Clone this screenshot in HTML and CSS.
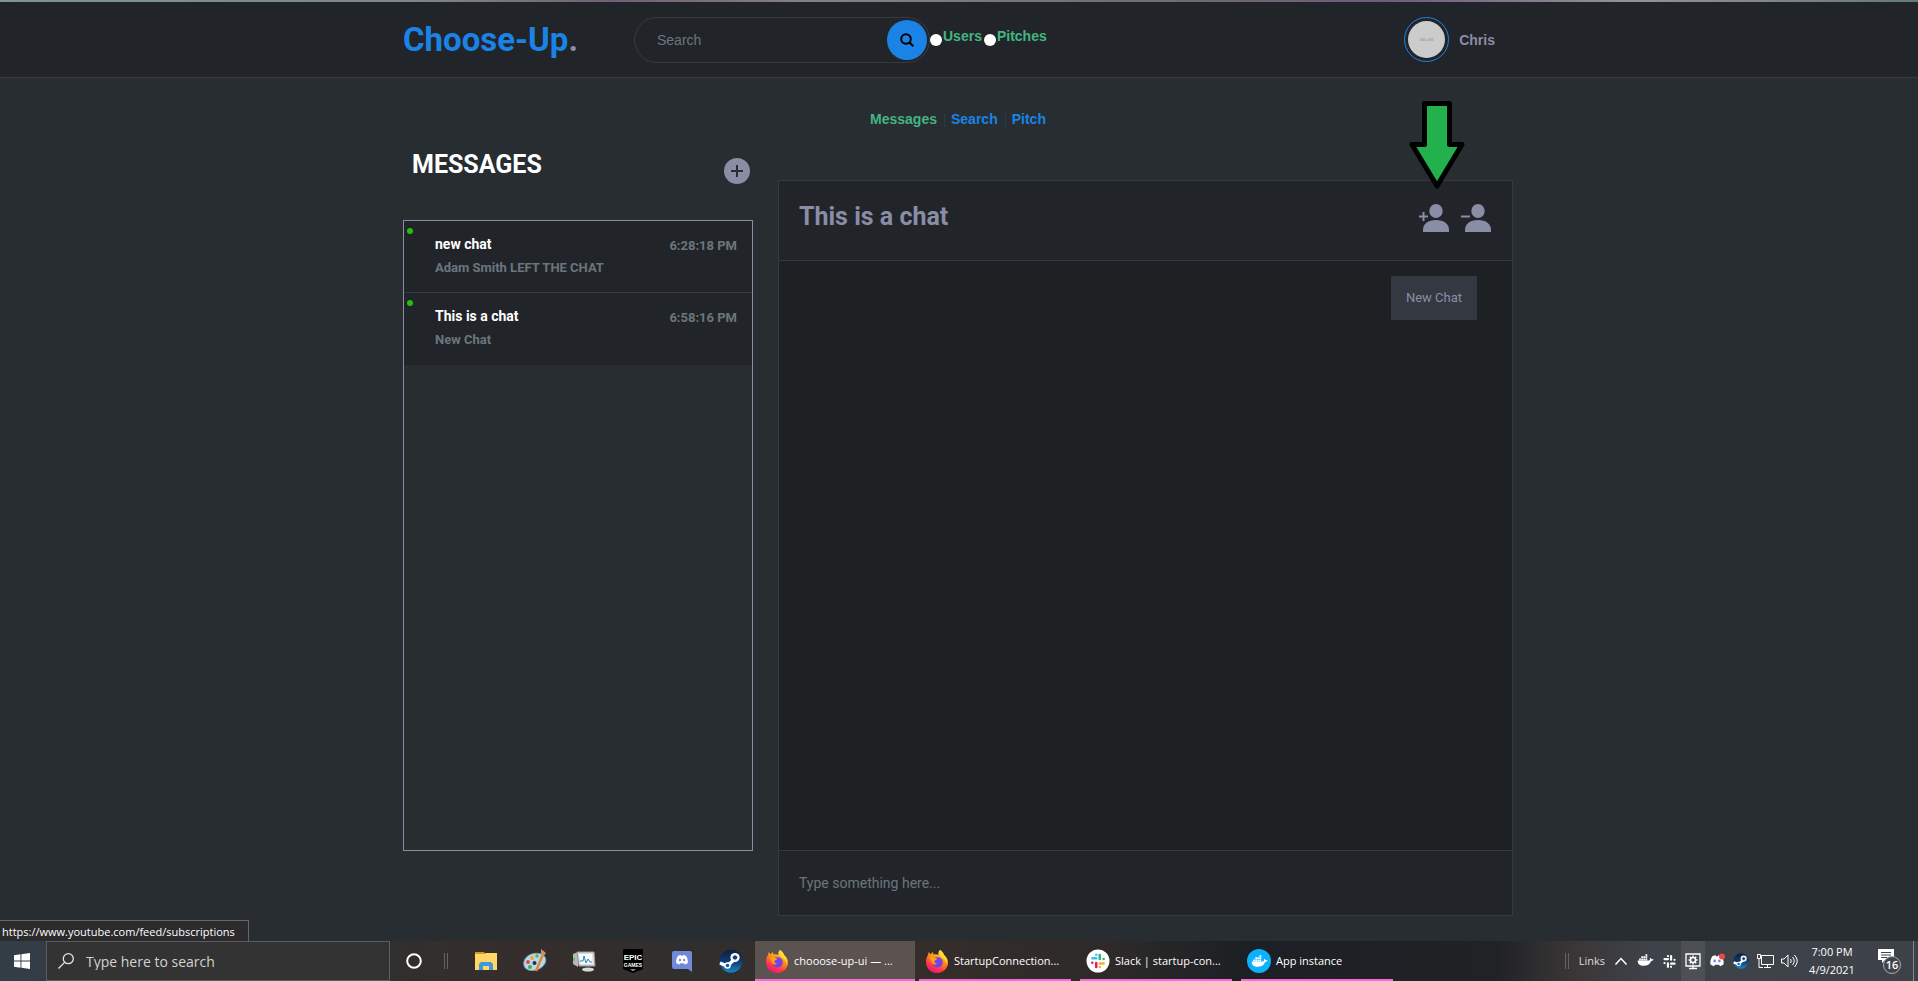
FILE: index.html
```html
<!DOCTYPE html>
<html lang="en">
<head>
<meta charset="utf-8">
<title>choose-up-ui</title>
<link rel="stylesheet" href="styles.css">
</head>
<body>
<svg class="defs" aria-hidden="true">
  <defs>
    <linearGradient id="flame" x1="0.8" y1="0" x2="0.3" y2="1"><stop offset="0" stop-color="#fff44f"/><stop offset="0.4" stop-color="#ff980e"/><stop offset="0.75" stop-color="#ff3647"/><stop offset="1" stop-color="#e31587"/></linearGradient>
    <linearGradient id="steamblue" x1="0" y1="0" x2="0" y2="1"><stop offset="0" stop-color="#111d3e"/><stop offset="0.5" stop-color="#0b3a72"/><stop offset="1" stop-color="#1a86c4"/></linearGradient>
    <symbol id="firefox" viewBox="0 0 24 24">
      <path fill="url(#flame)" d="M15 1c2 1 3.400 3 4 5 2 1.500 4 4 4 7.500C23 19.500 18 24 12 24S1 19.500 1 13c0-3 .8-5.400 2-7l.8-3 1.700 2.300L8 3l.4 2.600c2-.5 3.600-.3 5 .4C13 4 13.600 2.300 15 1z"/>
      <circle cx="12.500" cy="13.200" r="5.300" fill="#7542e5"/><path fill="#ffa21a" d="M4.500 9c2-2 4.500-1.500 6 .2l2 .3c-.5 1.500-2.500 1.400-3 2.500-.3 1.500 1 2.600 2.600 2.400-2.600 2.400-6 .4-5.600-2.600z"/>
      <path fill="#ffd93a" d="M15 1c2 1 3.400 3 4 5 2 2 3.600 5 2.700 9-.7-3.500-2.600-5.500-5-7C14.500 6.500 13.500 3.500 15 1z"/>
    </symbol>
    <symbol id="slack" viewBox="0 0 24 24">
      <g fill="none" stroke-width="3.600" stroke-linecap="round"><path class="s1" d="M9.500 3.200h0M9.500 8H4"/><path class="s2" d="M14.500 3.500V9M20 9.300h0"/><path class="s3" d="M14.500 15.500H20M14.500 20.500h0"/><path class="s4" d="M9.500 20.500V15M4 14.500h0"/></g>
    </symbol>
    <symbol id="steam" viewBox="0 0 24 24">
      <circle cx="12" cy="12" r="11.500" fill="url(#steamblue)"/><path d="M1 14l7 3 8-7" fill="none" stroke="#fff" stroke-width="3.500"/><circle cx="16" cy="8.500" r="4.600" fill="#fff"/><circle cx="16" cy="8.500" r="2.700" fill="#173a66" stroke="#fff"/><circle cx="8.500" cy="16.500" r="3.300" fill="#fff"/><circle cx="8.500" cy="16.500" r="1.800" fill="#1b5a94"/>
    </symbol>
    <symbol id="whale" viewBox="0 0 24 24">
      <path fill="#fff" d="M1 12h16c1-.2 1.500-1 1.200-2.400L19 8c1 .6 1.400 1.300 1.500 2.300 1-.2 2.200 0 3 .4-.5 1.500-2 2-3.500 1.900C18 17.500 14.500 19.500 9.500 19.500 4 19.500.8 17 1 12zM3 9h2.500v2.500H3zM6 9h2.500v2.500H6zM9 9h2.500v2.500H9zM12 9h2.500v2.500H12zM6 6h2.500v2.500H6zM9 6h2.500v2.500H9zM12 6h2.500v2.500H12zM12 3h2.500v2.500H12z"/>
    </symbol>
    <symbol id="discordface" viewBox="0 0 24 24">
      <path fill="#fff" d="M5 5c2-1 3.500-1.400 5-1.500l.6 1.300h2.800l.6-1.300c1.500.1 3 .5 5 1.500 2.200 3.500 3.400 7.500 3 12-1.800 1.500-3.600 2.300-5.500 2.700l-1.400-2.200H8.900l-1.400 2.200C5.600 19.300 3.800 18.500 2 17 1.600 12.500 2.800 8.500 5 5z"/><ellipse class="eye" cx="8.500" cy="12" rx="2" ry="2.200"/><ellipse class="eye" cx="15.500" cy="12" rx="2" ry="2.200"/>
    </symbol>
    <symbol id="person" viewBox="0 0 26 28"><ellipse cx="13" cy="7" rx="6.700" ry="7"/><path d="M0 28v-2c0-6 5-10 13-10s13 4 13 10v2z"/></symbol>
  </defs>
</svg>

<div class="strip"></div>
<header class="topbar">
  <div class="container topbar-inner">
    <a class="logo" href="#">Choose-Up<span>.</span></a>
    <form class="search-form">
      <div class="search-box">
        <input class="search-input" type="text" placeholder="Search" aria-label="Search">
        <button class="search-button" type="button" aria-label="Run search">
          <svg width="14" height="14" viewBox="0 0 14 14" fill="none" stroke="#000" stroke-width="2"><circle cx="6" cy="6" r="4.800"/><path d="M9 9l4.300 4.300"/></svg>
        </button>
      </div>
      <input class="radio" type="radio" name="scope" id="users"><label class="scope" for="users">Users</label>
      <input class="radio" type="radio" name="scope" id="pitches"><label class="scope" for="pitches">Pitches</label>
    </form>
    <a class="account" href="#">
      <span class="avatar"><span>500 x 500</span></span>
      Chris
    </a>
  </div>
</header>

<main class="container page">
  <nav class="subnav"><a class="current" href="#">Messages</a><a href="#">Search</a><a href="#">Pitch</a></nav>
  <div class="columns">
    <section class="sidebar">
      <div class="sidebar-head">
        <h1>MESSAGES</h1>
        <button class="add" type="button" aria-label="New conversation"><svg width="12" height="12" viewBox="0 0 12 12" stroke="#282d31" stroke-width="2"><path d="M6 0v12M0 6h12"/></svg></button>
      </div>
      <ul class="chat-list">
        <li class="chat-item"><i class="online"></i><div class="chat-text"><h2>new chat</h2><p>Adam Smith LEFT THE CHAT</p></div><time>6:28:18 PM</time></li>
        <li class="chat-item"><i class="online"></i><div class="chat-text"><h2>This is a chat</h2><p>New Chat</p></div><time>6:58:16 PM</time></li>
      </ul>
    </section>
    <section class="chat">
      <div class="chat-head">
        <h2>This is a chat</h2>
        <div class="chat-actions">
          <button type="button" aria-label="Add user"><svg width="30" height="28" viewBox="0 0 30 28"><path d="M4.500 8v9M0 12.500h9" stroke="#8a8da6" stroke-width="2"/><use href="#person" x="4" width="26" height="28"/></svg></button>
          <button type="button" aria-label="Remove user"><svg width="30" height="28" viewBox="0 0 30 28"><path d="M0 12.500h9" stroke="#8a8da6" stroke-width="2"/><use href="#person" x="4" width="26" height="28"/></svg></button>
        </div>
        <svg class="arrow" width="58" height="90" viewBox="0 0 58 90"><path d="M16.500 3.500h25v41H54L29 86 4 44.500h12.500z" fill="#22b14c" stroke="#000" stroke-width="5" stroke-linejoin="round"/></svg>
      </div>
      <div class="chat-body"><p class="bubble">New Chat</p></div>
      <input class="composer" type="text" placeholder="Type something here..." aria-label="Message">
    </section>
  </div>
</main>

<footer class="taskbar">
  <div class="status">https://www.youtube.com/feed/subscriptions</div>
  <button class="start" type="button" aria-label="Start"><svg width="16" height="16" viewBox="0 0 16 16" fill="#fff"><path d="M0 2.200L6.500 1.300V7.600H0zM7.400 1.200L16 0v7.600H7.400zM0 8.400h6.500v6.300L0 13.800zM7.400 8.400H16V16l-8.600-1.200z"/></svg></button>
  <label class="task-search"><svg width="16" height="16" viewBox="0 0 16 16" fill="none" stroke="#e6e6e6" stroke-width="1.300"><circle cx="10.300" cy="5.700" r="5"/><path d="M6.600 9.400L.5 15.500"/></svg><input type="text" placeholder="Type here to search" aria-label="Type here to search"></label>
  <button class="cortana" type="button" aria-label="Cortana"><svg width="16" height="16" viewBox="0 0 16 16"><circle cx="8" cy="8" r="6.800" fill="none" stroke="#fff" stroke-width="2"/></svg></button>
  <span class="grip"></span>
  <div class="pinned">
    <button type="button" aria-label="Files"><svg width="24" height="24" viewBox="0 0 24 24"><path fill="#d99a10" d="M1 3h9l2 3H1z"/><path fill="#ffd667" d="M1 5h9l2-1h11v17H1z"/><path fill="#3c9be0" d="M5 21v-6l2-2h10l2 2v6h-4v-4H9v4z"/></svg></button>
    <button type="button" aria-label="Paint"><svg width="24" height="24" viewBox="0 0 24 24"><path fill="#b8d9ec" stroke="#6f9eba" d="M2 10C6 3 20 2 22.500 9c2 7-7 13.500-15 12.500-7-1-8-7-5.500-11.500z"/><circle cx="5" cy="13" r="2" fill="#e14b4b"/><circle cx="9" cy="9" r="1.900" fill="#e9a732"/><circle cx="14" cy="7" r="1.800" fill="#5db83d"/><circle cx="7" cy="18" r="2" fill="#45ad46"/><circle cx="11.500" cy="14" r="2" fill="#203240"/><path d="M21 3l-8 19" stroke="#df8734" stroke-width="2.400"/><path fill="#c89464" d="M18 0l5 4-3 4-2-2z"/></svg></button>
    <button type="button" aria-label="Monitor"><svg width="24" height="24" viewBox="0 0 24 24"><path fill="#b7b9b9" d="M1 5l5-2v15l-5-3z"/><path fill="#d9dcdd" stroke="#999" d="M5 3h17l1 14H7z"/><path fill="#f4fbff" d="M7 5h13l.6 10H8.500z"/><path d="M8 12h3l1-5 2 7 2-4 2 3h2" stroke="#317fac" fill="none"/><ellipse cx="16" cy="20.500" rx="6" ry="2" fill="#d6d8d9"/><path fill="#5ec54b" d="M1 9h2v3H1z"/></svg></button>
    <button type="button" aria-label="Games"><svg width="24" height="24" viewBox="0 0 24 24"><path fill="#000" d="M2 1q0-1 1-1h18q1 0 1 1v18q0 1-1 1.500L12 24l-9-3.500Q2 20 2 19z"/><text x="12" y="11" class="epic">EPIC</text><text x="12" y="17.500" class="epic-sub">GAMES</text><path d="M9 20.500h6l-3 1.300z" fill="#fff"/></svg></button>
    <button type="button" aria-label="Discord"><svg width="24" height="24" viewBox="0 0 24 24"><path fill="#7289da" d="M4 2h16q2 0 2 2v19l-4-3H4q-2 0-2-2V4q0-2 2-2z"/><use href="#discordface" x="5" y="4" width="14" height="14"/></svg></button>
    <button type="button" aria-label="Steam"><svg width="24" height="24"><use href="#steam"/></svg></button>
  </div>
  <div class="tasks">
    <button class="task active" type="button"><svg width="24" height="24"><use href="#firefox"/></svg><span>chooose-up-ui — ...</span></button>
    <button class="task" type="button"><svg width="24" height="24"><use href="#firefox"/></svg><span>StartupConnection...</span></button>
    <button class="task" type="button"><svg class="slack-color" width="24" height="24" viewBox="0 0 24 24"><circle cx="12" cy="12" r="11.500" fill="#fff"/><use href="#slack" x="3.500" y="3.500" width="17" height="17"/></svg><span>Slack | startup-con...</span></button>
    <button class="task" type="button"><svg width="24" height="24" viewBox="0 0 24 24"><circle cx="12" cy="12" r="12" fill="#0db0fb"/><use href="#whale" x="4" y="4" width="17" height="17"/></svg><span>App instance</span></button>
  </div>
  <div class="tray">
    <span class="grip"></span>
    <span class="links">Links</span>
    <svg class="cell" viewBox="0 0 24 40"><path d="M6.500 23.500L12 17.500l5.500 6" fill="none" stroke="#fff" stroke-width="1.500"/></svg>
    <svg class="cell" viewBox="0 0 24 40"><use href="#whale" x="4" y="11" width="17" height="17"/></svg>
    <svg class="cell slack-white" viewBox="0 0 24 40"><use href="#slack" x="5" y="13" width="15" height="15"/></svg>
    <svg class="cell lit" viewBox="0 0 24 40" fill="none" stroke="#fff"><path stroke-width="1.300" d="M5 13h14v12H5zM8 27.500h8M12 25v2"/><circle cx="12" cy="19" r="2.500" stroke-width="1.500"/><path stroke-width="1.500" d="M12 14.500v2M12 21.500v2M7.500 19h2M14.500 19h2M8.800 15.800l1.400 1.400M15.200 15.800l-1.400 1.400M8.800 22.200l1.400-1.400M15.200 22.200l-1.400-1.400"/></svg>
    <svg class="cell tray-face" viewBox="0 0 24 40"><use href="#discordface" x="4" y="12" width="16" height="16"/><circle cx="17" cy="15.500" r="3" fill="#f04747"/></svg>
    <svg class="cell" viewBox="0 0 24 40"><use href="#steam" x="4" y="12" width="16" height="16"/></svg>
    <svg class="cell" viewBox="0 0 24 40" fill="none" stroke="#fff"><path d="M8.500 14.500h12v9h-12zM14.500 23.500v3M11 26.500h7M4.500 13.500h3v4h-3zM6 17.500v9h4"/></svg>
    <svg class="cell" viewBox="0 0 24 40" fill="none" stroke="#fff"><path d="M4.500 18v4H7l4 4V14l-4 4H4.500zM13.500 18q1.500 2 0 4M15.500 16q3.500 4 0 8M17.500 14q5.500 6 0 12"/></svg>
    <div class="clock"><span>7:00 PM</span><span>4/9/2021</span></div>
    <button class="notify" type="button" aria-label="16 notifications"><svg width="26" height="26" viewBox="0 0 26 26"><path fill="#fff" d="M1 1h16v11H8l-3 3v-3H1z"/><path d="M4 4.500h10M4 7h10M4 9.500h6" stroke="#41444a"/></svg><span class="badge">16</span></button>
    <span class="desktop"></span>
  </div>
</footer>
</body>
</html>
```
FILE: styles.css
```css
* { box-sizing: border-box; }
body {
  margin: 0;
  height: 100vh;
  display: flex;
  flex-direction: column;
  background: #282d31;
  font-family: Roboto, sans-serif;
  color: #8a8da6;
}
button { border: 0; padding: 0; background: none; color: inherit; font: inherit; }
input { border: 0; outline: 0; font: inherit; color: #fff; }
input::placeholder { color: #6c757d; opacity: 1; }
a { text-decoration: none; }
h1, h2, p, ul { margin: 0; padding: 0; }
svg { display: block; }
.defs { position: absolute; width: 0; height: 0; }
.container { width: 100%; max-width: 1112px; margin: 0 auto; }

.strip {
  height: 2px;
  background: linear-gradient(90deg, #7f9493, #7c8784 22%, #6f6077 32%, #858089 42%, #6f7075 58%, #6d5c78 72%, #93909c 85%, #66787c);
}
.topbar { background: #212529; border-bottom: 1px solid #343a40; }
.topbar-inner { display: grid; grid-template-columns: 231px 1fr auto; align-items: center; height: 75px; }
.logo { font-size: 33px; font-weight: 700; color: #1b83e6; }
.logo span { color: #8a8da6; }
.search-form {
  display: flex;
  align-items: center;
  font: bold 14px/20px "Liberation Sans", Arial, sans-serif;
}
.search-box {
  display: flex;
  align-items: center;
  width: 296px;
  height: 46px;
  padding: 0 2px 0 22px;
  border: 1px solid #343a40;
  border-radius: 23px;
}
.search-input { flex: 1; min-width: 0; background: none; font-weight: 400; padding: 0; }
.search-button { display: grid; place-items: center; width: 40px; height: 40px; border-radius: 50%; background: #1b83e6; }
.radio { appearance: none; width: 12px; height: 12px; margin: 0 1px 0 0; border-radius: 50%; background: #fff; }
.scope { color: #43b581; padding-bottom: 8px; margin-right: 2px; }
.account {
  display: flex;
  align-items: center;
  gap: 10px;
  padding-right: 20px;
  color: #8a8da6;
  font: bold 14px/20px "Liberation Sans", Arial, sans-serif;
}
.avatar { display: grid; width: 45px; height: 45px; padding: 3px; border: 1px solid #1b83e6; border-radius: 50%; }
.avatar span { display: grid; place-items: center; border-radius: 50%; background: #ccc; color: #999; font-size: 3px; line-height: 4px; }

.page { flex: 1; min-height: 0; display: flex; flex-direction: column; padding: 31px 2px 25px 0; }
.subnav { display: flex; justify-content: center; font: bold 14px/20px "Liberation Sans", Arial, sans-serif; }
.subnav a { color: #1b83e6; padding: 0 7px; }
.subnav a + a { background: linear-gradient(#263b4b, #263b4b) 0 5px / 1px 13px no-repeat; }
.subnav .current { color: #43b581; }
.columns { flex: 1; min-height: 0; display: grid; grid-template-columns: 350px 1fr; gap: 25px; padding-top: 11px; }
.sidebar { display: flex; flex-direction: column; padding-bottom: 65px; }
.sidebar-head { display: flex; justify-content: space-between; height: 80px; padding: 10px 3px 0 9px; }
.sidebar-head h1 { font-size: 25px; line-height: 30px; color: #fff; }
.add { display: grid; place-items: center; width: 26px; height: 26px; margin-top: 8px; border-radius: 50%; background: #8a8da6; }
.chat-list { flex: 1; list-style: none; border: 1px solid #8a8da6; }
.chat-item { position: relative; display: flex; justify-content: space-between; height: 72px; padding: 12px 15px 0 31px; background: #212529; font-weight: 700; }
.chat-item:not(:last-child) { border-bottom: 1px solid #343a40; }
.chat-item h2 { font-size: 14px; line-height: 22px; font-weight: 700; color: #fff; }
.chat-item p { font-size: 13px; line-height: 26px; color: #6c757d; }
.chat-item time { font-size: 13px; line-height: 26px; color: #6c757d; }
.online { position: absolute; left: 3px; top: 7px; width: 6px; height: 6px; border-radius: 50%; background: #1fc10a; }

.chat { display: flex; flex-direction: column; margin-top: 40px; border: 1px solid #343a40; background: #212529; }
.chat-head { position: relative; display: flex; justify-content: space-between; height: 80px; padding: 21px 21px 0 20px; border-bottom: 1px solid #343a40; }
.chat-head h2 { font-size: 25px; line-height: 30px; }
.chat-actions { display: flex; align-items: flex-start; gap: 12px; padding-top: 2px; }
.chat-actions svg { fill: #8a8da6; }
.arrow { position: absolute; right: 46px; top: -81px; }
.chat-body { flex: 1; display: flex; flex-direction: column; align-items: flex-end; padding: 15px 35px; background: #1d2124; }
.bubble { padding: 12px 15px; background: #343841; font-size: 13px; line-height: 20px; }
.composer { height: 65px; padding: 0 20px; background: #212529; border-top: 1px solid #343a40; font-size: 14px; }

.taskbar {
  position: relative;
  display: flex;
  height: 40px;
  background: linear-gradient(90deg, #343e48, #30302f 20%, #352d2b 27%, #302f2e 36%, #352d2a 48%, #2d2a29 58%, #1c1f23 65%, #202226 78%, #3a3636 82%, #3e4249 86%, #3d4148);
  color: #fff;
  font: 11px/16px "Open Sans", "Noto Sans", sans-serif;
}
.status { position: absolute; left: 0; bottom: 40px; padding: 3px 13px 1px 2px; background: #2b2a2c; border: solid #66666a; border-width: 1px 1px 0 0; }
.start { display: grid; place-items: center; width: 46px; padding-right: 2px; }
.task-search { display: flex; align-items: center; gap: 12px; width: 344px; padding: 0 11px; background: #333; border: 1px solid #5d5d5d; font-size: 14px; }
.task-search input { flex: 1; min-width: 0; background: none; padding: 2px 0 0; }
.task-search input::placeholder { color: #d2d2d2; }
.cortana { display: grid; place-items: center; width: 48px; }
.grip { align-self: center; width: 4px; height: 16px; border: solid #66625f; border-width: 0 1px; }
.pinned { display: flex; }
.cortana + .grip { margin: 0 13px 0 6px; }
.pinned button { display: grid; place-items: center; width: 49px; }
.epic { font: bold 8px "Liberation Sans", sans-serif; fill: #fff; text-anchor: middle; }
.epic-sub { font: bold 5px "Liberation Sans", sans-serif; fill: #fff; text-anchor: middle; }
.eye { fill: #7289da; }
.tasks { display: flex; gap: 9px; }
.task { display: flex; align-items: center; gap: 5px; width: 152px; padding: 2px 0 0 6px; border-bottom: 2px solid #f46bdc; white-space: nowrap; text-align: left; }
.task.active { width: 160px; padding-left: 10px; margin-right: -5px; background: #5a5350; }
.slack-color { --a: #36c5f0; --b: #2eb67d; --c: #ecb22e; --d: #e01e5a; }
.slack-white { --a: #fff; --b: #fff; --c: #fff; --d: #fff; }
.s1 { stroke: var(--a); }
.s2 { stroke: var(--b); }
.s3 { stroke: var(--c); }
.s4 { stroke: var(--d); }
.tray { display: flex; align-items: center; margin-left: auto; }
.links { padding: 0 4px 0 10px; color: #ddd; }
.cell { width: 24px; height: 40px; }
.lit { background: #4c5056; }
.clock { display: flex; flex-direction: column; width: 62px; text-align: center; line-height: 18px; }
.notify { position: relative; width: 50px; padding-left: 14px; }
.badge { position: absolute; left: 20px; top: 8px; width: 18px; height: 18px; border: 1px solid #aaa; border-radius: 50%; background: #41444a; font-size: 11px; font-weight: 600; line-height: 16px; text-align: center; }
.desktop { width: 5px; height: 40px; border-left: 1px solid #85878b; }
```
